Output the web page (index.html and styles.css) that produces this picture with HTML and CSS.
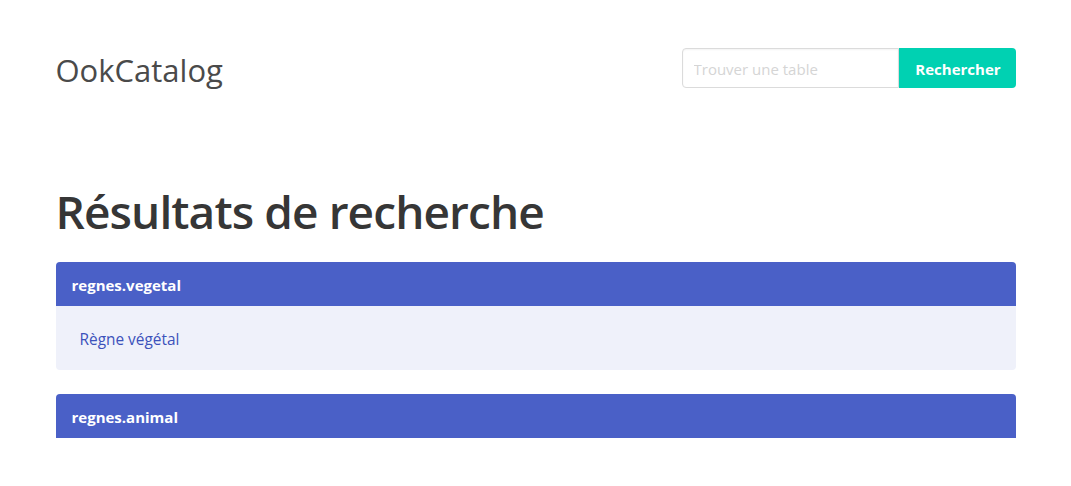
FILE: index.html
```html
<!DOCTYPE html>
<html lang="fr">
<head>
<meta charset="utf-8">
<title>OokCatalog</title>
<link rel="stylesheet" href="styles.css">
</head>
<body>
<section class="section">
  <div class="container header">
    <div class="brand">OokCatalog</div>
    <form class="search">
      <input class="input" type="text" placeholder="Trouver une table">
      <button class="button" type="button">Rechercher</button>
    </form>
  </div>
</section>
<section class="section">
  <div class="container">
    <h1 class="title">Résultats de recherche</h1>
    <article class="message">
      <div class="message-header">regnes.vegetal</div>
      <div class="message-body">Règne végétal</div>
    </article>
    <article class="message">
      <div class="message-header">regnes.animal</div>
    </article>
  </div>
</section>
</body>
</html>
```

FILE: styles.css
```css
html, body {
  margin: 0;
  padding: 0;
  background: #fff;
}
body {
  font-family: "Open Sans", "Noto Sans", sans-serif;
  font-size: 16px;
  line-height: 1.5;
  color: #4a4a4a;
}
.section {
  padding: 48px 24px;
}
.container {
  max-width: 960px;
  margin: 0 auto;
}
.header {
  display: flex;
  align-items: center;
  justify-content: space-between;
}
.brand {
  font-size: 31px;
  line-height: 40px;
  padding-top: 2px;
  margin-bottom: -2px;
  color: #4a4a4a;
}
.search {
  display: flex;
  margin: 0;
}
.input {
  box-sizing: border-box;
  width: 217px;
  height: 40px;
  border: 1px solid #dbdbdb;
  border-radius: 4px 0 0 4px;
  padding: 2px 11px 0;
  font-family: inherit;
  font-size: 15px;
  color: #363636;
  box-shadow: inset 0 1px 2px rgba(10,10,10,0.05);
  outline: none;
}
.input::placeholder {
  color: #d5d5d5;
}
.button {
  box-sizing: border-box;
  width: 117px;
  height: 40px;
  border: none;
  border-radius: 0 4px 4px 0;
  background: #00d1b2;
  color: #fff;
  font-family: inherit;
  font-weight: 700;
  font-size: 15px;
  padding: 2px 0 0 2px;
}
.title {
  margin: 0 0 24px;
  font-size: 46px;
  line-height: 54px;
  font-weight: 600;
  letter-spacing: -0.9px;
  color: #363636;
}
.message {
  margin-bottom: 24px;
  border-radius: 4px;
  background: #eff1fa;
  font-size: 15px;
}
.message-header {
  background: #4a60c7;
  color: #fff;
  font-weight: 700;
  padding: 13px 16px 11px;
  line-height: 20px;
  border-radius: 4px 4px 0 0;
}
.message-body {
  padding: 22px 24px 18px;
  line-height: 24px;
  font-size: 15.4px;
  color: #3c52bb;
}
```
